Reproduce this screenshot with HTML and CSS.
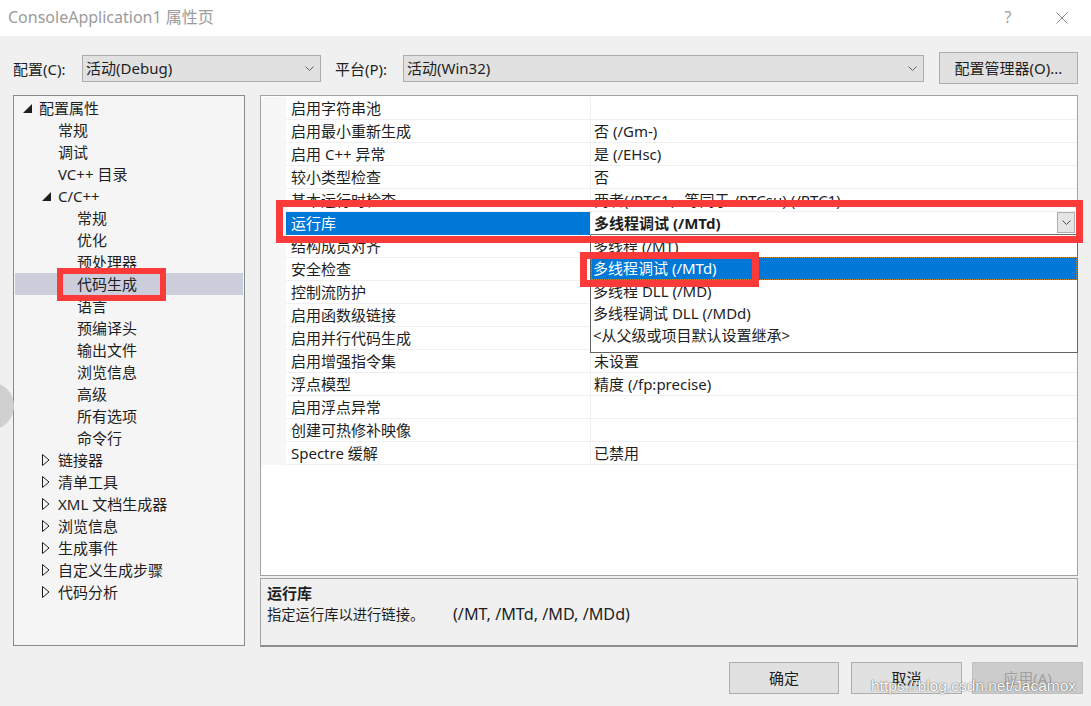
FILE: index.html
```html
<!DOCTYPE html>
<html>
<head>
<meta charset="utf-8">
<link rel="stylesheet" href="styles.css">
</head>
<body>
<div class="window">
  <div class="titlebar">
    <span class="title">ConsoleApplication1 属性页</span>
    <span class="tb-help">?</span>
    <span class="tb-close"><svg width="12" height="12" viewBox="0 0 12 12"><path d="M0.5 0.5 L11.5 11.5 M11.5 0.5 L0.5 11.5" stroke="#8a8a8a" stroke-width="1" fill="none"/></svg></span>
  </div>

  <div class="config-row">
    <span class="lbl lbl-config">配置(C):</span>
    <div class="combo combo-config"><span class="combo-text">活动(Debug)</span><svg class="chev" width="9" height="5" viewBox="0 0 9 5"><path d="M0.5 0.5 L4.5 4.5 L8.5 0.5" stroke="#606060" fill="none"/></svg></div>
    <span class="lbl lbl-platform">平台(P):</span>
    <div class="combo combo-platform"><span class="combo-text">活动(Win32)</span><svg class="chev" width="9" height="5" viewBox="0 0 9 5"><path d="M0.5 0.5 L4.5 4.5 L8.5 0.5" stroke="#606060" fill="none"/></svg></div>
    <button class="btn btn-manager">配置管理器(O)...</button>
  </div>

  <div class="content">
    <div class="tree">
      <div class="node l0"><span class="tw"><svg width="9" height="9" viewBox="0 0 9 9"><polygon points="9,0 9,9 0,9" fill="#1e1e1e"/></svg></span><span>配置属性</span></div>
      <div class="node l1"><span class="tw"></span><span>常规</span></div>
      <div class="node l1"><span class="tw"></span><span>调试</span></div>
      <div class="node l1"><span class="tw"></span><span>VC++ 目录</span></div>
      <div class="node l1"><span class="tw"><svg width="9" height="9" viewBox="0 0 9 9"><polygon points="9,0 9,9 0,9" fill="#1e1e1e"/></svg></span><span>C/C++</span></div>
      <div class="node l2"><span class="tw"></span><span>常规</span></div>
      <div class="node l2"><span class="tw"></span><span>优化</span></div>
      <div class="node l2"><span class="tw"></span><span>预处理器</span></div>
      <div class="node l2 sel"><span class="tw"></span><span>代码生成</span></div>
      <div class="node l2"><span class="tw"></span><span>语言</span></div>
      <div class="node l2"><span class="tw"></span><span>预编译头</span></div>
      <div class="node l2"><span class="tw"></span><span>输出文件</span></div>
      <div class="node l2"><span class="tw"></span><span>浏览信息</span></div>
      <div class="node l2"><span class="tw"></span><span>高级</span></div>
      <div class="node l2"><span class="tw"></span><span>所有选项</span></div>
      <div class="node l2"><span class="tw"></span><span>命令行</span></div>
      <div class="node l1"><span class="tw"><svg width="8" height="12" viewBox="0 0 8 12"><polygon points="0.5,0.5 7,6 0.5,11.5" fill="none" stroke="#1e1e1e"/></svg></span><span>链接器</span></div>
      <div class="node l1"><span class="tw"><svg width="8" height="12" viewBox="0 0 8 12"><polygon points="0.5,0.5 7,6 0.5,11.5" fill="none" stroke="#1e1e1e"/></svg></span><span>清单工具</span></div>
      <div class="node l1"><span class="tw"><svg width="8" height="12" viewBox="0 0 8 12"><polygon points="0.5,0.5 7,6 0.5,11.5" fill="none" stroke="#1e1e1e"/></svg></span><span>XML 文档生成器</span></div>
      <div class="node l1"><span class="tw"><svg width="8" height="12" viewBox="0 0 8 12"><polygon points="0.5,0.5 7,6 0.5,11.5" fill="none" stroke="#1e1e1e"/></svg></span><span>浏览信息</span></div>
      <div class="node l1"><span class="tw"><svg width="8" height="12" viewBox="0 0 8 12"><polygon points="0.5,0.5 7,6 0.5,11.5" fill="none" stroke="#1e1e1e"/></svg></span><span>生成事件</span></div>
      <div class="node l1"><span class="tw"><svg width="8" height="12" viewBox="0 0 8 12"><polygon points="0.5,0.5 7,6 0.5,11.5" fill="none" stroke="#1e1e1e"/></svg></span><span>自定义生成步骤</span></div>
      <div class="node l1"><span class="tw"><svg width="8" height="12" viewBox="0 0 8 12"><polygon points="0.5,0.5 7,6 0.5,11.5" fill="none" stroke="#1e1e1e"/></svg></span><span>代码分析</span></div>
    </div>

    <div class="right">
      <div class="grid">
        <div class="prow"><span class="gut"></span><span class="pname">启用字符串池</span><span class="pval"></span></div>
        <div class="prow"><span class="gut"></span><span class="pname">启用最小重新生成</span><span class="pval">否 (/Gm-)</span></div>
        <div class="prow"><span class="gut"></span><span class="pname">启用 C++ 异常</span><span class="pval">是 (/EHsc)</span></div>
        <div class="prow"><span class="gut"></span><span class="pname">较小类型检查</span><span class="pval">否</span></div>
        <div class="prow"><span class="gut"></span><span class="pname">基本运行时检查</span><span class="pval">两者(/RTC1，等同于 /RTCsu) (/RTC1)</span></div>
        <div class="prow active"><span class="gut"></span><span class="pname">运行库</span><span class="pval editing"><span class="edit-text">多线程调试 (/MTd)</span><span class="drop-btn"><svg width="9" height="5" viewBox="0 0 9 5"><path d="M0.5 0.5 L4.5 4.5 L8.5 0.5" stroke="#505050" fill="none"/></svg></span></span></div>
        <div class="prow"><span class="gut"></span><span class="pname">结构成员对齐</span><span class="pval">默认设置</span></div>
        <div class="prow"><span class="gut"></span><span class="pname">安全检查</span><span class="pval">启用安全检查 (/GS)</span></div>
        <div class="prow"><span class="gut"></span><span class="pname">控制流防护</span><span class="pval"></span></div>
        <div class="prow"><span class="gut"></span><span class="pname">启用函数级链接</span><span class="pval"></span></div>
        <div class="prow"><span class="gut"></span><span class="pname">启用并行代码生成</span><span class="pval"></span></div>
        <div class="prow"><span class="gut"></span><span class="pname">启用增强指令集</span><span class="pval">未设置</span></div>
        <div class="prow"><span class="gut"></span><span class="pname">浮点模型</span><span class="pval">精度 (/fp:precise)</span></div>
        <div class="prow"><span class="gut"></span><span class="pname">启用浮点异常</span><span class="pval"></span></div>
        <div class="prow"><span class="gut"></span><span class="pname">创建可热修补映像</span><span class="pval"></span></div>
        <div class="prow"><span class="gut"></span><span class="pname">Spectre 缓解</span><span class="pval">已禁用</span></div>

        <div class="dropdown">
          <div class="opt first">多线程 (/MT)</div>
          <div class="opt chosen">多线程调试 (/MTd)</div>
          <div class="opt">多线程 DLL (/MD)</div>
          <div class="opt">多线程调试 DLL (/MDd)</div>
          <div class="opt">&lt;从父级或项目默认设置继承&gt;</div>
        </div>
      </div>
      <div class="desc">
        <div class="desc-title">运行库</div>
        <div class="desc-text"><span class="desc-main">指定运行库以进行链接。</span><span class="desc-opts">(/MT, /MTd, /MD, /MDd)</span></div>
      </div>
    </div>
  </div>

  <div class="buttons">
    <button class="btn btn-ok">确定</button>
    <button class="btn btn-cancel">取消</button>
    <button class="btn btn-apply" disabled>应用(A)</button>
  </div>

  <div class="side-blob"></div>
  <div class="mark mark-tree"></div>
  <div class="mark mark-row"></div>
  <div class="mark mark-opt"></div>
  <div class="watermark">https://blog.csdn.net/Jacamox</div>
</div>
</body>
</html>
```

FILE: styles.css
```css
* { box-sizing: border-box; }
html, body { margin: 0; padding: 0; }
body {
  width: 1091px;
  height: 706px;
  overflow: hidden;
  background: #f0f0f0;
  font-family: "Noto Sans", "Noto Sans CJK SC", sans-serif;
  font-size: 15px;
  color: #1e1e1e;
}
.window {
  position: relative;
  width: 1091px;
  height: 706px;
  background: #f0f0f0;
  overflow: hidden;
}

/* title bar */
.titlebar {
  height: 36px;
  background: #ffffff;
  display: flex;
  align-items: center;
  padding-left: 8px;
  padding-right: 23px;
}
.title {
  flex: 1;
  color: #9b9b9b;
  font-size: 16px;
  line-height: 20px;
  margin-top: -2px;
}
.tb-help {
  width: 12px;
  text-align: center;
  color: #a5a5a5;
  font-size: 16px;
  line-height: 20px;
  margin-top: -2px;
}
.tb-close {
  margin-left: 42px;
  width: 12px;
  height: 12px;
  display: flex;
  margin-top: -1px;
}

/* config row */
.config-row {
  margin-top: 16px;
  height: 32px;
  display: flex;
  align-items: center;
  padding-left: 13px;
}
.lbl { line-height: 20px; margin-top: 2px; }
.lbl-config { width: 69px; }
.lbl-platform { width: 68px; margin-left: 14px; }
.combo {
  height: 27px;
  background: #e1e1e1;
  border: 1px solid #adadad;
  display: flex;
  align-items: center;
  padding: 0 6px 0 3px;
}
.combo-text { flex: 1; line-height: 24px; }
.combo-config { width: 239px; }
.combo-platform { width: 521px; }
.chev { display: block; }
.btn {
  font-family: "Noto Sans", "Noto Sans CJK SC", sans-serif;
  font-size: 15px;
  color: #1e1e1e;
  background: #e1e1e1;
  border: 1px solid #adadad;
  padding: 0;
  line-height: 20px;
}
.btn-manager { margin-left: 15px; width: 139px; height: 32px; }

/* content */
.content {
  display: flex;
  margin-top: 11px;
  padding-left: 13px;
}
.tree {
  width: 232px;
  height: 551px;
  border: 1px solid #868a91;
  background: #f5f5f5;
  padding-top: 1px;
}
.node {
  height: 22px;
  margin: 0 1px;
  display: flex;
  align-items: center;
  line-height: 22px;
  white-space: nowrap;
}
.node.sel { background: #cccedb; }
.l0 { padding-left: 0; }
.l1 { padding-left: 19px; }
.l2 { padding-left: 38px; }
.tw {
  width: 24px;
  height: 22px;
  flex: none;
  display: flex;
  align-items: center;
  padding-left: 8px;
}
.tw svg { display: block; }

.right {
  margin-left: 15px;
  width: 818px;
  display: flex;
  flex-direction: column;
}
.grid {
  position: relative;
  height: 481px;
  border: 1px solid #a3a3a3;
  background: #ffffff;
  padding-top: 1px;
}
.prow {
  height: 23px;
  display: flex;
  line-height: 22px;
  white-space: nowrap;
}
.gut { width: 25px; flex: none; background: #f7f7f7; }
.pname {
  width: 305px;
  flex: none;
  padding-left: 5px;
  border-bottom: 1px solid #f0f0f4;
  border-right: 1px solid #f0f0f4;
  overflow: hidden;
}
.pval {
  flex: 1;
  padding-left: 3px;
  border-bottom: 1px solid #f0f0f4;
  overflow: hidden;
}
.prow.active .pname {
  background: #0078d7;
  color: #ffffff;
  border-bottom-color: #0078d7;
}
.pval.editing {
  display: flex;
  align-items: flex-start;
  padding-right: 2px;
  border-bottom: 1px solid #6e6e6e;
  font-weight: bold;
}
.edit-text { flex: 1; }
.drop-btn {
  width: 18px;
  height: 21px;
  background: #e5e5e5;
  border: 1px solid #adadad;
  display: flex;
  align-items: center;
  justify-content: center;
}
.drop-btn svg { display: block; }

.dropdown {
  position: absolute;
  left: 329px;
  top: 139px;
  width: 488px;
  height: 118px;
  background: #ffffff;
  border: 1px solid #646464;
  border-top: none;
}
.opt {
  height: 22px;
  line-height: 22px;
  padding-left: 2px;
  white-space: nowrap;
}
.opt.chosen {
  height: 23px;
  background: #0078d7;
  color: #ffffff;
  outline: 1px dotted #c98a2e;
  outline-offset: -1px;
}

.desc {
  margin-top: 2px;
  height: 69px;
  border: 1px solid #a3a3a3;
  border-bottom: 2px solid #8e8e8e;
  background: #f0f0f0;
  padding: 4px 0 0 6px;
}
.desc-title { font-weight: bold; line-height: 20px; }
.desc-text { line-height: 22px; white-space: nowrap; }
.desc-main { display: inline-block; width: 186px; font-size: 14.3px; }
.desc-opts { font-size: 16.2px; }

/* bottom buttons */
.buttons {
  margin-top: 15px;
  display: flex;
  justify-content: flex-end;
  padding-right: 8px;
}
.btn-ok { width: 110px; height: 32px; }
.btn-cancel { width: 111px; height: 32px; margin-left: 12px; }
.btn-apply {
  width: 111px;
  height: 32px;
  margin-left: 10px;
  background: #cccccc;
  border-color: #bfbfbf;
  color: #a0a0a0;
}

/* overlays */
.side-blob {
  position: absolute;
  left: -34px;
  top: 382px;
  width: 48px;
  height: 48px;
  border-radius: 50%;
  background: #d0d0d0;
}
.mark {
  position: absolute;
  border: 7px solid #fb3a3a;
}
.mark-tree { left: 57px; top: 268px; width: 109px; height: 33px; border-width: 6px; }
.mark-row { left: 276px; top: 200px; width: 807px; height: 43px; }
.mark-opt { left: 580px; top: 252px; width: 179px; height: 35px; }
.watermark {
  position: absolute;
  left: 871px;
  top: 677px;
  font-family: "Liberation Sans", Arial, sans-serif;
  font-size: 15.5px;
  line-height: 18px;
  color: #ffffff;
  text-shadow: 0 0 1px rgba(0, 0, 0, 0.6), 0 0 2px rgba(0, 0, 0, 0.35);
  white-space: nowrap;
}
```
